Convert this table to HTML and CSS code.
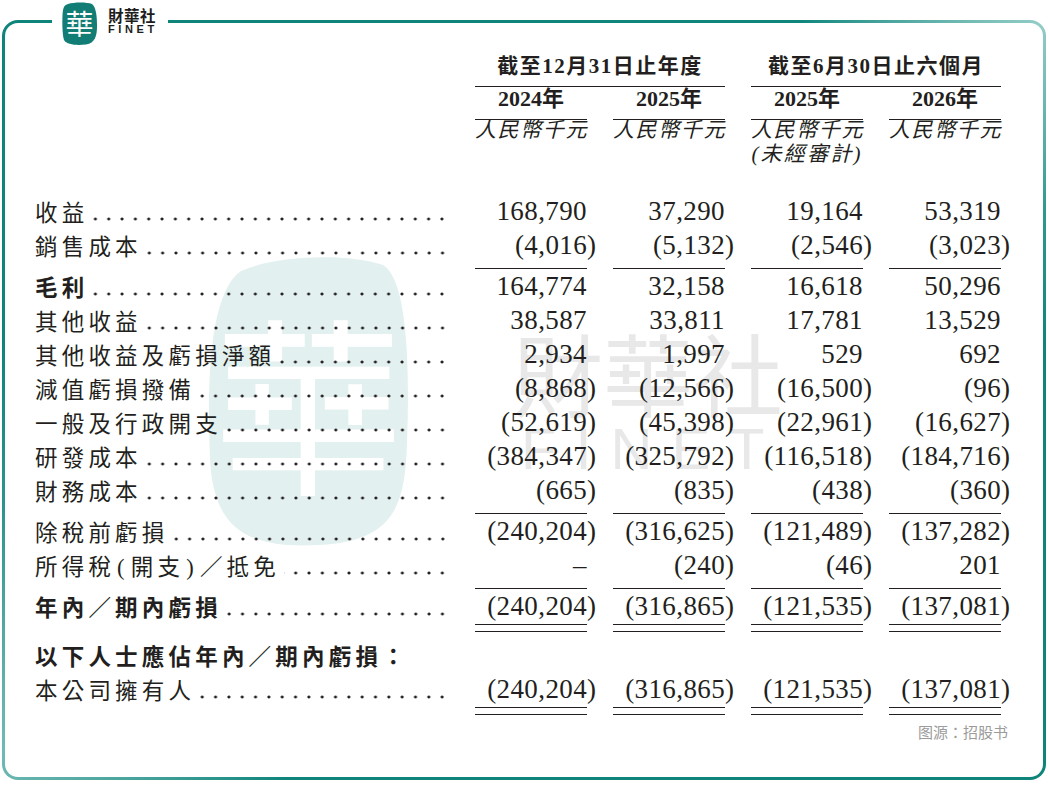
FILE: index.html
```html
<!DOCTYPE html>
<html lang="zh-Hant">
<head>
<meta charset="utf-8">
<title>財華社 FINET</title>
<link rel="stylesheet" href="styles.css">
</head>
<body>
<div class="frame">
  <div class="sheet">
    <div class="watermark" aria-hidden="true">
      <div class="wm-seal">
        <svg class="wm-blob" width="203" height="295" viewBox="0 0 203 295"><path d="M34 18 C70 2 140 0 176 12 C200 26 203 110 200 190 C198 255 186 288 112 292 C40 296 6 276 3 205 C0 130 2 40 34 18 Z" fill="#e2f0ef"/></svg>
        <span class="wm-hua">華</span>
      </div>
      <div class="wm-text">
        <span class="wm-cn">財華社</span>
        <span class="wm-en">FINET</span>
      </div>
    </div>

    <div class="table">
      <div class="hr h1">
        <div></div>
        <div class="hc span2">截至12月31日止年度</div>
        <div class="hc span2">截至6月30日止六個月</div>
      </div>
      <div class="hr h2">
        <div></div>
        <div class="hc">2024年</div>
        <div class="hc">2025年</div>
        <div class="hc">2025年</div>
        <div class="hc">2026年</div>
      </div>
      <div class="hr h3">
        <div></div>
        <div class="hc">人民幣千元</div>
        <div class="hc">人民幣千元</div>
        <div class="hc">人民幣千元<br><span class="unaud">(未經審計)</span></div>
        <div class="hc">人民幣千元</div>
      </div>

      <div class="tbody">
        <div class="r">
          <div class="lab"><span class="t">收益</span><span class="lead"></span></div>
          <div class="n">168,790</div><div class="n">37,290</div><div class="n">19,164</div><div class="n">53,319</div>
        </div>
        <div class="r u">
          <div class="lab"><span class="t">銷售成本</span><span class="lead"></span></div>
          <div class="n">(4,016<span class="rp">)</span></div><div class="n">(5,132<span class="rp">)</span></div><div class="n">(2,546<span class="rp">)</span></div><div class="n">(3,023<span class="rp">)</span></div>
        </div>
        <div class="r b">
          <div class="lab"><span class="t">毛利</span><span class="lead"></span></div>
          <div class="n">164,774</div><div class="n">32,158</div><div class="n">16,618</div><div class="n">50,296</div>
        </div>
        <div class="r">
          <div class="lab"><span class="t">其他收益</span><span class="lead"></span></div>
          <div class="n">38,587</div><div class="n">33,811</div><div class="n">17,781</div><div class="n">13,529</div>
        </div>
        <div class="r">
          <div class="lab"><span class="t">其他收益及虧損淨額</span><span class="lead"></span></div>
          <div class="n">2,934</div><div class="n">1,997</div><div class="n">529</div><div class="n">692</div>
        </div>
        <div class="r">
          <div class="lab"><span class="t">減值虧損撥備</span><span class="lead"></span></div>
          <div class="n">(8,868<span class="rp">)</span></div><div class="n">(12,566<span class="rp">)</span></div><div class="n">(16,500<span class="rp">)</span></div><div class="n">(96<span class="rp">)</span></div>
        </div>
        <div class="r">
          <div class="lab"><span class="t">一般及行政開支</span><span class="lead"></span></div>
          <div class="n">(52,619<span class="rp">)</span></div><div class="n">(45,398<span class="rp">)</span></div><div class="n">(22,961<span class="rp">)</span></div><div class="n">(16,627<span class="rp">)</span></div>
        </div>
        <div class="r">
          <div class="lab"><span class="t">研發成本</span><span class="lead"></span></div>
          <div class="n">(384,347<span class="rp">)</span></div><div class="n">(325,792<span class="rp">)</span></div><div class="n">(116,518<span class="rp">)</span></div><div class="n">(184,716<span class="rp">)</span></div>
        </div>
        <div class="r u">
          <div class="lab"><span class="t">財務成本</span><span class="lead"></span></div>
          <div class="n">(665<span class="rp">)</span></div><div class="n">(835<span class="rp">)</span></div><div class="n">(438<span class="rp">)</span></div><div class="n">(360<span class="rp">)</span></div>
        </div>
        <div class="r">
          <div class="lab"><span class="t">除稅前虧損</span><span class="lead"></span></div>
          <div class="n">(240,204<span class="rp">)</span></div><div class="n">(316,625<span class="rp">)</span></div><div class="n">(121,489<span class="rp">)</span></div><div class="n">(137,282<span class="rp">)</span></div>
        </div>
        <div class="r u">
          <div class="lab"><span class="t">所得稅<span class="par">(</span>開支<span class="par">)</span>／抵免</span><span class="lead"></span></div>
          <div class="n">–</div><div class="n">(240<span class="rp">)</span></div><div class="n">(46<span class="rp">)</span></div><div class="n">201</div>
        </div>
        <div class="r d b">
          <div class="lab"><span class="t">年內／期內虧損</span><span class="lead"></span></div>
          <div class="n">(240,204<span class="rp">)</span></div><div class="n">(316,865<span class="rp">)</span></div><div class="n">(121,535<span class="rp">)</span></div><div class="n">(137,081<span class="rp">)</span></div>
        </div>
        <div class="r b">
          <div class="lab full"><span class="t">以下人士應佔年內／期內虧損：</span></div>
        </div>
        <div class="r d">
          <div class="lab"><span class="t">本公司擁有人</span><span class="lead"></span></div>
          <div class="n">(240,204<span class="rp">)</span></div><div class="n">(316,865<span class="rp">)</span></div><div class="n">(121,535<span class="rp">)</span></div><div class="n">(137,081<span class="rp">)</span></div>
        </div>
      </div>
    </div>

    <div class="source">图源：招股书</div>
  </div>
</div>

<div class="logo">
  <div class="seal">
    <svg class="seal-bg" width="35" height="43" viewBox="0 0 35 43"><path d="M6 2 C12 0 25 0 30 2 C34 5 35 14 35 24 C35 34 33 41 24 42.5 C15 43.5 5 43 2 38 C0 32 0 14 1 8 C2 4 3 3 6 2 Z" fill="#127d74"/></svg>
    <span class="seal-hua">華</span>
  </div>
  <div class="brand">
    <span class="brand-cn">財華社</span>
    <span class="brand-en">FINET</span>
  </div>
</div>
</body>
</html>
```
FILE: styles.css
```css
html, body {
  margin: 0;
  background: #ffffff;
}

body {
  position: relative;
  width: 1048px;
  height: 800px;
  overflow: hidden;
  box-sizing: border-box;
  padding: 20px 2px 0 2px;
  font-family: "Noto Sans CJK TC", "Noto Sans CJK SC", sans-serif;
  color: #231f20;
}

/* ---------- frame ---------- */
.frame {
  height: 760px;
  box-sizing: border-box;
  padding: 3px;
  border-radius: 16px;
  background: conic-gradient(from 0deg at 50% 50%,
    #0e847a 0deg, #0f867c 36deg, #93ccc7 54deg, #2f9890 70deg, #0e847a 84deg,
    #0e847a 212deg, #70bab4 236deg, #2c968e 258deg, #0e847a 276deg, #0e847a 360deg);
}

.sheet {
  position: relative;
  height: 100%;
  box-sizing: border-box;
  background: #ffffff;
  border-radius: 13px;
  padding: 28px 0 0 30px;
  overflow: hidden;
}

/* ---------- logo (sits over the top border) ---------- */
.logo {
  position: absolute;
  top: 0;
  left: 52px;
  width: 116px;
  height: 48px;
  background: #ffffff;
  display: flex;
  align-items: flex-start;
  padding-left: 10px;
  box-sizing: border-box;
  gap: 11px;
}

.seal {
  position: relative;
  width: 35px;
  height: 43px;
  margin-top: 2px;
}

.seal-bg {
  display: block;
}

.seal-hua {
  position: absolute;
  left: 0;
  top: 0;
  width: 35px;
  height: 43px;
  line-height: 42px;
  text-align: center;
  font-size: 28px;
  font-weight: 400;
  color: #ffffff;
}

.brand {
  display: flex;
  flex-direction: column;
  padding-top: 7px;
}

.brand-cn {
  font-size: 15.5px;
  line-height: 17px;
  font-weight: 700;
  letter-spacing: 0.5px;
  color: #1d1d1d;
}

.brand-en {
  font-family: "Liberation Sans", Arial, sans-serif;
  font-size: 11px;
  line-height: 11px;
  font-weight: 700;
  letter-spacing: 3.6px;
  color: #1d1d1d;
}

/* ---------- watermark ---------- */
.watermark {
  position: absolute;
  inset: 0;
  z-index: 0;
  pointer-events: none;
}

.wm-seal {
  position: absolute;
  left: 202px;
  top: 230px;
  width: 203px;
  height: 295px;
}

.wm-blob {
  display: block;
}

.wm-hua {
  position: absolute;
  left: 0;
  top: 0;
  width: 203px;
  height: 295px;
  line-height: 290px;
  text-align: center;
  font-size: 190px;
  font-weight: 400;
  color: #ffffff;
}

.wm-text {
  position: absolute;
  left: 508px;
  top: 300px;
  display: flex;
  flex-direction: column;
  color: #e8e8e8;
}

.wm-cn {
  font-size: 90px;
  line-height: 96px;
  font-weight: 400;
}

.wm-en {
  font-family: "Liberation Sans", Arial, sans-serif;
  font-size: 58px;
  line-height: 60px;
  letter-spacing: 19px;
  padding-left: 8px;
}

/* ---------- table ---------- */
.table {
  position: relative;
  z-index: 1;
  width: 966px;
}

.hr,
.r {
  display: grid;
  grid-template-columns: 414px repeat(4, 112px);
  column-gap: 26px;
}

.hc {
  text-align: center;
  white-space: nowrap;
}

.span2 {
  grid-column: span 2;
}

.h1 .hc {
  font-family: "Liberation Serif", "Noto Sans CJK TC", serif;
  font-size: 21px;
  line-height: 30px;
  font-weight: 700;
  letter-spacing: 1.5px;
  padding-bottom: 5px;
  border-bottom: 1px solid #231f20;
}

.h2 .hc {
  font-family: "Liberation Serif", "Noto Sans CJK TC", serif;
  font-size: 22px;
  line-height: 24px;
  font-weight: 700;
  padding-bottom: 8px;
  border-bottom: 1px solid #231f20;
}

.h3 {
  margin-top: -2px;
}

.h3 .hc {
  font-family: "Liberation Serif", "Noto Sans CJK TC", serif;
  font-size: 21px;
  line-height: 24px;
  font-style: italic;
  letter-spacing: 1.6px;
}

.unaud {
  display: inline-block;
  letter-spacing: 2.2px;
}

.tbody {
  margin-top: 28px;
}

.r {
  height: 34px;
  line-height: 34px;
}

.r.u {
  height: 41px;
}

.r.d {
  height: 49px;
}

.lab {
  display: flex;
  align-items: flex-start;
  white-space: nowrap;
  font-size: 22.5px;
}

.lab.full {
  grid-column: 1 / -1;
}

.t {
  letter-spacing: 4.2px;
}

.par {
  font-family: "Liberation Serif", serif;
  padding: 0 2px;
}

.r.b .t {
  font-weight: 700;
}

.lead {
  flex: 1;
  height: 34px;
  margin-left: 4px;
  background-image: radial-gradient(circle at center, #231f20 1.25px, rgba(35, 31, 32, 0) 1.75px);
  background-size: 13.33px 4px;
  background-repeat: repeat-x;
  background-position: right 0 top 23px;
}

.n {
  font-family: "Liberation Serif", "Times New Roman", serif;
  font-size: 27px;
  letter-spacing: 0.4px;
  text-align: right;
  white-space: nowrap;
}

.rp {
  margin-right: -9.5px;
}

.r.u .n {
  background-image: linear-gradient(#231f20, #231f20);
  background-size: 100% 1px;
  background-repeat: no-repeat;
  background-position: left bottom;
}

.r.d .n {
  background-image: linear-gradient(#231f20, #231f20), linear-gradient(#231f20, #231f20);
  background-size: 100% 1.3px, 100% 1.3px;
  background-repeat: no-repeat, no-repeat;
  background-position: left bottom 13px, left bottom 6px;
}

/* ---------- source ---------- */
.source {
  position: relative;
  z-index: 1;
  margin-top: 1px;
  padding-right: 35px;
  text-align: right;
  font-family: "Noto Sans CJK SC", "Noto Sans CJK TC", sans-serif;
  font-size: 15px;
  line-height: 20px;
  color: #9b9b9b;
}
```
